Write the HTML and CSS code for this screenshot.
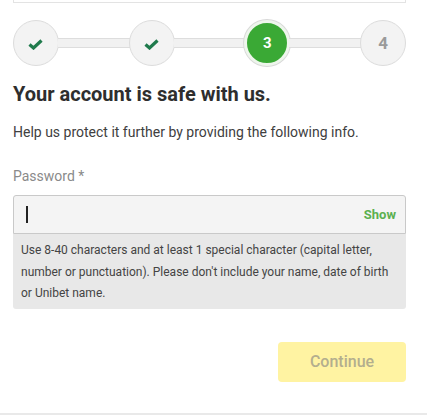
FILE: index.html
```html
<!DOCTYPE html>
<html lang="en">
<head>
<meta charset="utf-8">
<title>Unibet registration – step 3</title>
<link rel="stylesheet" href="styles.css">
</head>
<body>
<div class="page">
  <div class="prev-card"></div>

  <ol class="steps">
    <li class="step done">
      <svg width="15" height="11" viewBox="0 0 15 11"><path d="M1.5 5.5 L5.5 9 L13.5 1.5" fill="none" stroke="#1f7a4c" stroke-width="3.2"/></svg>
    </li>
    <li class="connector"></li>
    <li class="step done">
      <svg width="15" height="11" viewBox="0 0 15 11"><path d="M1.5 5.5 L5.5 9 L13.5 1.5" fill="none" stroke="#1f7a4c" stroke-width="3.2"/></svg>
    </li>
    <li class="connector"></li>
    <li class="step current">3</li>
    <li class="connector"></li>
    <li class="step todo">4</li>
  </ol>

  <h1 class="title">Your account is safe with us.</h1>
  <p class="lead">Help us protect it further by providing the following info.</p>

  <label class="label" for="pw">Password *</label>
  <div class="field">
    <span class="caret"></span>
    <input id="pw" class="input" type="password">
    <button class="show" type="button">Show</button>
  </div>
  <div class="hint">Use 8-40 characters and at least 1 special character (capital letter, number or punctuation). Please don't include your name, date of birth or Unibet name.</div>

  <div class="actions">
    <button class="continue" type="button">Continue</button>
  </div>
</div>
<div class="footer"></div>
</body>
</html>
```

FILE: styles.css
```css
* { box-sizing: border-box; }

html, body {
  margin: 0;
  padding: 0;
  background: #ffffff;
  font-family: Roboto, "Liberation Sans", Arial, sans-serif;
  color: #333333;
}

.page {
  width: 393px;
  margin-left: 13px;
  height: 413px;
}

.prev-card {
  height: 3px;
  border: 1px solid #e3e3e3;
  border-top: none;
}

.steps {
  list-style: none;
  margin: 17px 0 0;
  padding: 0;
  display: flex;
  align-items: center;
}

.step {
  width: 46px;
  height: 46px;
  flex: none;
  border-radius: 50%;
  display: flex;
  align-items: center;
  justify-content: center;
  font-weight: 700;
}

.step.done,
.step.todo {
  background: #f3f3f3;
  border: 1.5px solid #dcdcdc;
}

.step.done svg {
  margin-top: 3px;
  margin-left: -1px;
}

.step.todo {
  color: #9a9a9a;
  font-size: 17px;
}

.step.current {
  background: #3aa935;
  color: #ffffff;
  font-size: 15px;
  border: 3px solid #eef6ec;
  box-shadow: 0 0 0 1px #d9d9d9;
}

.connector {
  flex: 1;
  height: 10px;
  background: #f1f1f1;
  border-top: 1px solid #dddddd;
  border-bottom: 1px solid #dddddd;
  margin: 0 -1px;
}

.title {
  margin: 16px 0 0;
  font-size: 20px;
  line-height: 24px;
  font-weight: 700;
  color: #2e2e2e;
}

.lead {
  margin: 16px 0 0;
  font-size: 14px;
  line-height: 20px;
  color: #404040;
}

.label {
  display: block;
  margin-top: 24px;
  font-size: 14px;
  line-height: 20px;
  color: #8a8a8a;
}

.field {
  margin-top: 9px;
  height: 39px;
  display: flex;
  align-items: center;
  background: #f4f4f4;
  border: 1px solid #c9c9c9;
  border-radius: 3px 3px 0 0;
  padding: 0 9px 0 12px;
}

.caret {
  width: 1.5px;
  height: 17px;
  background: #222222;
  flex: none;
}

.input {
  flex: 1;
  min-width: 0;
  border: none;
  background: transparent;
  outline: none;
  font: inherit;
  padding: 0;
}

.show {
  border: none;
  background: transparent;
  padding: 0;
  font-family: inherit;
  font-size: 13px;
  font-weight: 700;
  color: #5bb04f;
}

.hint {
  background: #e8e8e8;
  border-radius: 0 0 3px 3px;
  padding: 6px 8px 4px;
  font-size: 12px;
  line-height: 21.6px;
  color: #444444;
}

.actions {
  margin-top: 33px;
  display: flex;
  justify-content: flex-end;
}

.continue {
  width: 128px;
  height: 40px;
  border: none;
  border-radius: 4px;
  background: #fff3a2;
  color: #b3ae8e;
  font-family: inherit;
  font-size: 16px;
  font-weight: 500;
}

.footer {
  height: 2px;
  background: #e9e9e9;
}
```
